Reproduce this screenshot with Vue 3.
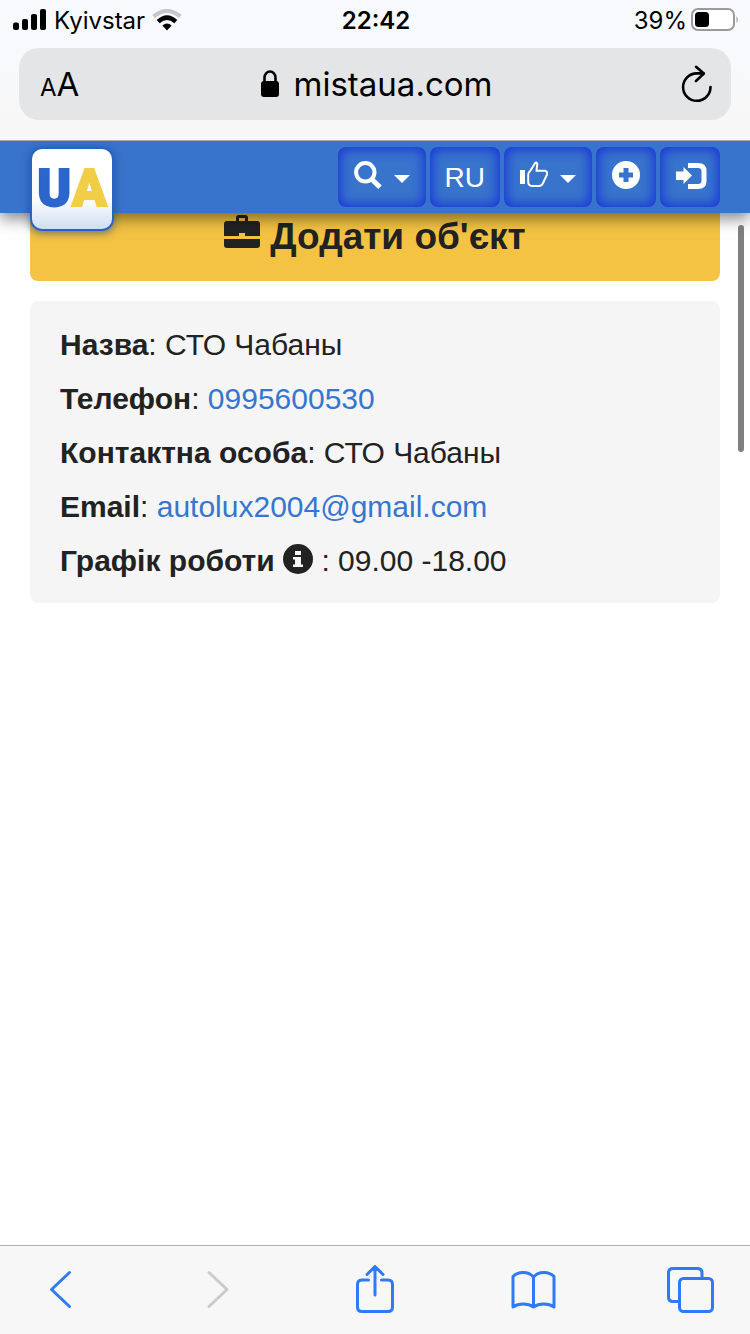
<script setup>
const contacts = [
  { label: 'Назва', value: 'СТО Чабаны' },
  { label: 'Телефон', value: '0995600530', href: 'tel:0995600530' },
  { label: 'Контактна особа', value: 'СТО Чабаны' },
  { label: 'Email', value: 'autolux2004@gmail.com', href: 'mailto:autolux2004@gmail.com' },
  { label: 'Графік роботи', value: '09.00 -18.00', info: true },
]
</script>

<template>
  <div class="screen">
    <header class="chrome">
      <div class="status">
        <div class="carrier">
          <svg width="34" height="22" viewBox="0 0 34 22" aria-hidden="true">
            <rect x="0" y="13.500" width="6" height="7.500" rx="2" />
            <rect x="9" y="10" width="6" height="11" rx="2" />
            <rect x="18" y="5" width="6" height="16" rx="2" />
            <rect x="27" y="0" width="6" height="21" rx="2" />
          </svg>
          <span>Kyivstar</span>
          <svg class="wifi" width="30" height="22" viewBox="0 0 30 22" aria-hidden="true">
            <path d="M1.600 7.600Q15-3.800 28.400 7.600" fill="none" stroke="#c6c7ca" stroke-width="4" />
            <path d="M6.200 12.600Q15 4.600 23.800 12.600" fill="none" stroke="#000" stroke-width="4.400" />
            <path d="M10.400 16.600Q15 12.400 19.600 16.600L15 21.400Z" />
          </svg>
        </div>
        <time class="clock">22:42</time>
        <div class="power">
          <span>39%</span>
          <svg width="48" height="24" viewBox="0 0 48 24" aria-hidden="true">
            <rect x="1" y="1" width="42" height="21" rx="6" fill="#fff" stroke="#9b9b9d" stroke-width="2" />
            <rect x="4" y="4" width="14" height="15" rx="3.500" />
            <path d="M45.500 8q2.500 3.500 0 7z" fill="#9b9b9d" />
          </svg>
        </div>
      </div>
      <div class="address">
        <button class="reader" type="button" aria-label="Reader options"><span class="small">A</span><span>A</span></button>
        <div class="site">
          <svg width="19" height="28" viewBox="0 0 19 28" aria-hidden="true">
            <rect x="0" y="11" width="18" height="16" rx="3" />
            <path d="M3.500 12V7.500a5.500 6 0 0 1 11 0V12" fill="none" stroke="#000" stroke-width="2.600" />
          </svg>
          <span>mistaua.com</span>
        </div>
        <button class="reload" type="button" aria-label="Reload">
          <svg width="32" height="38" viewBox="0 0 32 38" fill="none" stroke="#000" stroke-width="2.600" stroke-linecap="round" stroke-linejoin="round" aria-hidden="true">
            <path d="M29.500 22A13.700 13.700 0 1 1 15.800 8.400H22.500" />
            <path d="M15 1.800L22.800 8.600L15 16" />
          </svg>
        </button>
      </div>
    </header>

    <nav class="navbar">
      <a class="logo" href="#" aria-label="UA"><span class="u">U</span><span class="a">A</span></a>
      <div class="actions">
        <button type="button" aria-label="Пошук">
          <svg width="28" height="32" viewBox="0 0 28 32" aria-hidden="true">
            <circle cx="11.300" cy="11.300" r="9.200" fill="none" stroke="#fff" stroke-width="4" />
            <path d="M17.500 18L26 26.300" stroke="#fff" stroke-width="5" />
          </svg>
          <span class="caret"></span>
        </button>
        <button class="lang" type="button">RU</button>
        <button type="button" aria-label="Вподобання">
          <svg width="28" height="32" viewBox="0 0 28 32" aria-hidden="true">
            <rect x="0" y="9" width="5" height="14" fill="#fff" />
            <path d="M8.200 13.500Q8.200 11.500 10.500 9.500L15 2.200Q16.500.500 17.300 2.800L16.500 9.800H25Q27.300 10 27.300 13L22.800 22.500Q21.500 25 19 25H12Q8.200 24.500 8.200 21Z" fill="none" stroke="#fff" stroke-width="2" stroke-linejoin="round" />
          </svg>
          <span class="caret"></span>
        </button>
        <button type="button" aria-label="Додати">
          <svg width="28" height="32" viewBox="0 0 28 32" aria-hidden="true">
            <path fill="#fff" fill-rule="evenodd" d="M14 0a14 14 0 1 1 0 28a14 14 0 0 1 0-28ZM11.500 7V11.500H7V16.500H11.500V21H16.500V16.500H21V11.500H16.500V7Z" />
          </svg>
        </button>
        <button class="login" type="button" aria-label="Увійти">
          <svg width="32" height="32" viewBox="0 0 32 32" aria-hidden="true">
            <path d="M0 10.500H7.500V6L16 14.500L7.500 23V19H0Z" fill="#fff" />
            <path d="M12 4.500H22Q28 4.500 28 10V20Q28 25.500 22 25.500H12" fill="none" stroke="#fff" stroke-width="5" />
          </svg>
        </button>
      </div>
    </nav>

    <main class="content">
      <a class="add" href="#">
        <svg width="36" height="34" viewBox="0 0 36 34" aria-hidden="true">
          <path fill="#222" fill-rule="evenodd" d="M12 6V3Q12 0 15 0H21Q24 0 24 3V6H33Q36 6 36 9V21H21V18H15V21H0V9Q0 6 3 6ZM15 6H21V3H15Z" />
          <path fill="#222" d="M0 24H36V30Q36 33 33 33H3Q0 33 0 30Z" />
        </svg>
        <span>Додати об'єкт</span>
      </a>

      <section class="card">
        <p v-for="item in contacts" :key="item.label">
          <b>{{ item.label }}</b><template v-if="item.info">
            {{ ' ' }}<svg class="info" width="30" height="30" viewBox="0 0 30 30" aria-hidden="true">
              <circle cx="15" cy="15" r="15" fill="#222" />
              <path fill="#f5f5f5" d="M12 7H18V11H12ZM10 13H18V20.500H20V23H10V20.500H12V15.500H10Z" />
            </svg>{{ ' ' }}
          </template>: <a v-if="item.href" :href="item.href">{{ item.value }}</a><template v-else>{{ item.value }}</template>
        </p>
      </section>
      <div class="scrollbar"></div>
    </main>

    <footer class="toolbar">
      <button type="button" aria-label="Back">
        <svg viewBox="0 0 48 48"><path d="M33.500 7.500L15.500 24.500L33.500 41.500" /></svg>
      </button>
      <button type="button" aria-label="Forward" disabled>
        <svg viewBox="0 0 48 48"><path d="M15 7.500L33 24.500L15 41.500" /></svg>
      </button>
      <button type="button" aria-label="Share">
        <svg viewBox="0 0 48 48">
          <path d="M17.500 15H11Q6.500 15 6.500 19.500V42Q6.500 46.500 11 46.500H37Q41.500 46.500 41.500 42V19.500Q41.500 15 37 15H30.500" />
          <path d="M24 30V2M16 9.500L24 1.500L32 9.500" />
        </svg>
      </button>
      <button type="button" aria-label="Bookmarks">
        <svg viewBox="0 0 48 48">
          <path d="M24.500 12C19.500 6 9 6 4 11.500V42C9.500 38 19 38 24.500 42C30 38 39.500 38 45 42V11.500C40 6 29.500 6 24.500 12V42" />
        </svg>
      </button>
      <button type="button" aria-label="Tabs">
        <svg viewBox="0 0 48 48">
          <rect x="13.500" y="13.500" width="33" height="33" rx="4" />
          <path d="M13 36.500H7Q2.500 36.500 2.500 32V8Q2.500 3.500 7 3.500H31.500Q36 3.500 36 8V13" />
        </svg>
      </button>
    </footer>
  </div>
</template>

<style>
body {
  background: #fff;
}
</style>

<style scoped>
.screen {
  display: flex;
  flex-direction: column;
  min-height: 100vh;
  color: #222;
  font: 30px/54px "Liberation Sans", Arial, sans-serif;
}

button {
  margin: 0;
  padding: 0;
  border: 0;
  background: none;
  font: inherit;
  color: inherit;
}

svg {
  flex: none;
}

.chrome {
  position: relative;
  z-index: 2;
  padding-bottom: 20px;
  border-bottom: 1px solid #a9a9a4;
  background: linear-gradient(#f8f9fc 30%, #f7f7f7);
  color: #000;
  font-family: Inter, sans-serif;
}

.status {
  display: grid;
  grid-template-columns: 1fr auto 1fr;
  align-items: center;
  height: 40px;
  margin-bottom: 8px;
  padding: 0 11px 0 13px;
  font-size: 24px;
  line-height: 38px;
}

.status span,
.clock {
  padding-top: 2px;
}

.carrier,
.power {
  display: flex;
  align-items: center;
}

.carrier {
  gap: 7px;
}

.clock {
  font-weight: 600;
}

.power {
  justify-content: flex-end;
  gap: 4px;
}

.address {
  display: grid;
  grid-template-columns: 1fr auto 1fr;
  align-items: center;
  height: 72px;
  margin: 0 19px;
  padding: 0 18px 0 21px;
  border-radius: 20px;
  background: #e4e5e6;
  font-size: 33px;
}

.reader {
  justify-self: start;
  padding-top: 4px;
}

.small {
  font-size: 24px;
}

.site {
  display: flex;
  align-items: center;
  gap: 14px;
}

.reload {
  display: flex;
  justify-self: end;
}

.navbar {
  position: relative;
  z-index: 1;
  display: flex;
  align-items: flex-start;
  justify-content: space-between;
  height: 72px;
  padding: 6px 30px;
  box-sizing: border-box;
  background: #3873cc;
  box-shadow: 0 5px 15px rgba(0, 0, 0, 0.5);
}

.logo {
  display: flex;
  align-items: center;
  justify-content: center;
  gap: 1px;
  width: 80px;
  height: 80px;
  border: 2px solid #2863c8;
  border-radius: 12px;
  background: linear-gradient(#fff 60%, #d0def2);
  box-shadow: 0 2px 8px rgba(20, 60, 120, 0.6);
  font: 900 51px/80px Roboto, sans-serif;
  -webkit-text-stroke: 2px currentColor;
  text-decoration: none;
}

.u {
  color: #2c65cb;
}

.a {
  color: #f2cd48;
}

.actions {
  display: flex;
  gap: 4px;
}

.actions button {
  display: flex;
  align-items: center;
  gap: 12px;
  height: 60px;
  padding: 0 16px;
  border-radius: 8px;
  box-shadow: inset 0 0 12px 2px #1733d8;
  color: #fff;
  font-size: 28px;
}

.actions .lang {
  padding: 2px 15px 0;
}

.actions .login {
  padding: 0 12px 0 16px;
}

.caret {
  margin-top: 4px;
  border-top: 8px solid #fff;
  border-right: 8px solid transparent;
  border-left: 8px solid transparent;
}

.content {
  position: relative;
  flex: 1;
  padding: 0 30px;
}

.add {
  display: flex;
  justify-content: center;
  gap: 10px;
  padding: 2px 0 22px;
  border-radius: 0 0 8px 8px;
  background: #f4c343;
  color: #222;
  font-size: 37px;
  font-weight: 700;
  line-height: 44px;
  text-decoration: none;
}

.card {
  margin-top: 20px;
  padding: 17px 30px 15px;
  border-radius: 8px;
  background: #f5f5f5;
}

.card p {
  margin: 0;
}

.card a {
  color: #3776cf;
  text-decoration: none;
}

.info {
  vertical-align: -3px;
}

.scrollbar {
  position: absolute;
  top: 12px;
  right: 6px;
  width: 6px;
  height: 227px;
  border-radius: 3px;
  background: #808080;
}

.toolbar {
  display: flex;
  justify-content: space-between;
  padding: 19px 30px 21px;
  border-top: 1px solid #b0b0b0;
  background: #f7f7f7;
}

.toolbar button {
  display: flex;
  justify-content: center;
  width: 60px;
  color: #3079f7;
}

.toolbar button:disabled {
  color: #cbcbcb;
}

.toolbar svg {
  width: 48px;
  height: 48px;
  fill: none;
  stroke: currentColor;
  stroke-width: 3;
  stroke-linecap: round;
  stroke-linejoin: round;
}
</style>
